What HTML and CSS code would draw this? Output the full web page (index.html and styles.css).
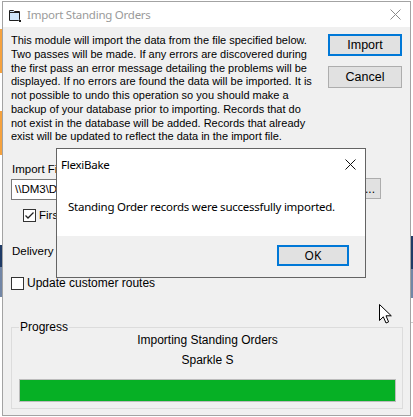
FILE: index.html
```html
<!DOCTYPE html>
<html>
<head>
<meta charset="utf-8">
<link rel="stylesheet" href="styles.css">
</head>
<body>
<div class="desk">
  <div class="gutter gutter-left"></div>
  <div class="window">
    <div class="titlebar">
      <svg class="app-icon" width="13" height="13" viewBox="0 0 13 13">
        <path d="M1.5 1.5 H5.5 L6.5 2.5 H11.5 V10.5 L10.5 11.5 H1.5 Z" fill="#cfe6fa" stroke="#1e1e1e" stroke-width="1"/>
        <path d="M1.5 3.5 H11.5" stroke="#1e1e1e" stroke-width="1"/>
        <rect x="11" y="11" width="2" height="2" fill="#1e1e1e"/>
      </svg>
      <span class="title">Import Standing Orders</span>
      <svg class="close inactive" width="11" height="11" viewBox="0 0 11 11">
        <path d="M0.5 0.5 L10.5 10.5 M10.5 0.5 L0.5 10.5" stroke="#8a8a8a" stroke-width="1"/>
      </svg>
    </div>
    <div class="client">
      <div class="top">
        <p class="intro">This module will import the data from the file specified below.<br>Two passes will be made. If any errors are discovered during<br>the first pass an error message detailing the problems will be<br>displayed. If no errors are found the data will be imported. It is<br>not possible to undo this operation so you should make a<br>backup of your database prior to importing. Records that do<br>not exist in the database will be added. Records that already<br>exist will be updated to reflect the data in the import file.</p>
        <div class="btns">
          <button class="btn btn-default">Import</button>
          <button class="btn">Cancel</button>
        </div>
      </div>
      <div class="label"><span class="clip clip-label">Import File</span></div>
      <div class="filerow">
        <div class="input"><span class="clip clip-input">\\DM3\Data</span></div>
        <button class="btn btn-browse">...</button>
      </div>
      <div class="check check-indent">
        <span class="box">
          <svg width="11" height="11" viewBox="0 0 11 11"><path d="M1.5 5.5 L4 8 L9.5 2.5" fill="none" stroke="#222" stroke-width="1.3"/></svg>
        </span>
        <span class="check-text small clip clip-first">First line</span>
      </div>
      <div class="label delivery">Delivery</div>
      <div class="check check-update">
        <span class="box"></span>
        <span class="check-text">Update customer routes</span>
      </div>
      <fieldset class="group">
        <legend>Progress</legend>
        <div class="pline pline1">Importing Standing Orders</div>
        <div class="pline pline2">Sparkle S</div>
        <div class="bar"><div class="bar-fill" style="width:100%"></div></div>
      </fieldset>
    </div>

    <div class="msgbox">
      <div class="msg-main">
        <div class="msg-title">
          <span>FlexiBake</span>
          <svg class="close" width="11" height="11" viewBox="0 0 11 11">
            <path d="M0.5 0.5 L10.5 10.5 M10.5 0.5 L0.5 10.5" stroke="#111" stroke-width="1"/>
          </svg>
        </div>
        <div class="msg-text">Standing Order records were successfully imported.</div>
      </div>
      <div class="msg-foot">
        <button class="btn btn-default btn-ok">OK</button>
      </div>
    </div>
  </div>
  <div class="gutter gutter-right"></div>
</div>
<svg class="cursor" width="15" height="22" viewBox="0 0 15 22">
  <path d="M1.5 1.5 L1.5 17.5 L5.3 13.8 L8 20 L10.6 18.9 L8 12.8 L13.3 12.8 Z" fill="#fff" stroke="#000" stroke-width="1" stroke-linejoin="miter"/>
</svg>
</body>
</html>
```

FILE: styles.css
```css
* { box-sizing: border-box; }
html, body { margin: 0; padding: 0; }
body {
  width: 413px;
  height: 417px;
  overflow: hidden;
  background: #ffffff;
  font-family: "Liberation Sans", Arial, sans-serif;
  color: #000;
  position: relative;
}
.desk {
  display: flex;
  height: 417px;
  padding-top: 1px;
}
.gutter { width: 2px; flex: none; height: 416px; }
.gutter-left {
  background: linear-gradient(to bottom,
    #ffffff 0 28px, #f5a23e 28px 72px, #ffffff 72px 110px,
    #f5a23e 110px 154px, #ffffff 154px 244px, #1f3b66 244px 266px,
    #7286a6 266px 296px, #ffffff 296px);
}
.gutter-right {
  background: linear-gradient(to bottom,
    #ffffff 0 235px, #1f3b66 235px 268px, #7286a6 268px 297px,
    #ffffff 297px 321px, #cccccc 321px 322px, #ffffff 322px);
}
.window {
  width: 409px;
  height: 415px;
  border: 1px solid #a3a3a3;
  background: #f0f0f0;
  position: relative;
  display: flex;
  flex-direction: column;
}
.titlebar {
  height: 25px;
  flex: none;
  background: #fff;
  display: flex;
  align-items: center;
  padding-left: 5px;
}
.app-icon { flex: none; margin-top: 1px; }
.title {
  margin-left: 6px;
  font-family: "Noto Sans", "Open Sans", sans-serif;
  font-size: 11.5px;
  letter-spacing: -0.25px;
  color: #9a9a9a;
}
.close { margin-left: auto; margin-right: 9px; flex: none; }

.client {
  flex: 1;
  padding: 7px 8px 0 8px;
  display: flex;
  flex-direction: column;
}
.top { display: flex; justify-content: space-between; }
.intro {
  margin: 0;
  font-size: 11px;
  line-height: 13.75px;
  white-space: nowrap;
}
.btns { display: flex; flex-direction: column; gap: 10px; }
.btn {
  width: 74px;
  height: 22px;
  padding: 0;
  background: #e1e1e1;
  border: 1px solid #adadad;
  font-family: "Liberation Sans", Arial, sans-serif;
  font-size: 12.5px;
  color: #000;
}
.btn-default { border: 2px solid #0078d7; }

.clip {
  display: inline-block;
  overflow: hidden;
  white-space: nowrap;
  vertical-align: top;
}
.clip-label { max-width: 44px; }
.clip-input { max-width: 41px; }
.clip-first { max-width: 17px; }

.label {
  font-size: 11.5px;
  line-height: 14px;
  margin-top: 18px;
  padding-left: 1px;
}
.filerow {
  display: flex;
  align-items: flex-start;
  margin-top: 2px;
  padding-right: 21px;
  height: 22px;
}
.input {
  flex: 1;
  margin-top: 1px;
  height: 21px;
  border: 1px solid #7a7a7a;
  background: #fff;
  font-size: 11.5px;
  line-height: 19px;
  padding-left: 3px;
  white-space: nowrap;
  overflow: hidden;
}
.btn-browse {
  width: 22px;
  height: 21px;
  margin-left: 4px;
  font-size: 12px;
}
.check {
  display: flex;
  align-items: center;
}
.check-indent { margin-top: 9px; margin-left: 12px; height: 13px; }
.box {
  width: 13px;
  height: 13px;
  flex: none;
  border: 1px solid #333;
  background: #fff;
  display: flex;
  align-items: center;
  justify-content: center;
}
.check-text { margin-left: 3px; font-size: 12px; line-height: 15px; white-space: nowrap; }
.check-text.small { font-size: 11.5px; }
.delivery { margin-top: 22px; }
.check-update { margin-top: 18px; height: 15px; }

.group {
  margin: 29px -1px 0 0;
  padding: 0 6px 6px 7px;
  border: 1px solid #dcdcdc;
  min-width: 0;
}
.group legend {
  padding: 0 1px;
  font-size: 12px;
  line-height: 15px;
}
.pline {
  font-size: 12px;
  line-height: 15px;
  text-align: center;
}
.pline1 { margin-top: -2px; }
.pline2 { margin-top: 5px; }
.bar {
  margin-top: 11px;
  height: 23px;
  border: 1px solid #bcbcbc;
  background: #e6e6e6;
}
.bar-fill { height: 100%; background: #06b025; }

.msgbox {
  position: absolute;
  left: 53px;
  top: 146px;
  width: 310px;
  height: 130px;
  border: 1px solid #646464;
  background: #f0f0f0;
  display: flex;
  flex-direction: column;
  font-family: "Noto Sans", "Open Sans", sans-serif;
  font-size: 11.5px;
  letter-spacing: -0.25px;
}
.msg-main { flex: 0 0 87px; background: #fff; }
.msg-title {
  display: flex;
  align-items: center;
  height: 31px;
  padding-left: 4px;
  line-height: 16px;
}
.msg-title .close { margin-right: 9px; }
.msg-text {
  margin-top: 19px;
  padding-left: 11px;
  line-height: 16px;
  white-space: nowrap;
}
.msg-foot {
  flex: 1;
  display: flex;
  justify-content: flex-end;
  align-items: flex-start;
  padding: 9px 16px 0 0;
}
.btn-ok {
  width: 72px;
  height: 21px;
  font-family: "Noto Sans", "Open Sans", sans-serif;
  font-size: 12px;
  letter-spacing: 0;
}
.cursor {
  position: absolute;
  left: 378px;
  top: 303px;
}
```
